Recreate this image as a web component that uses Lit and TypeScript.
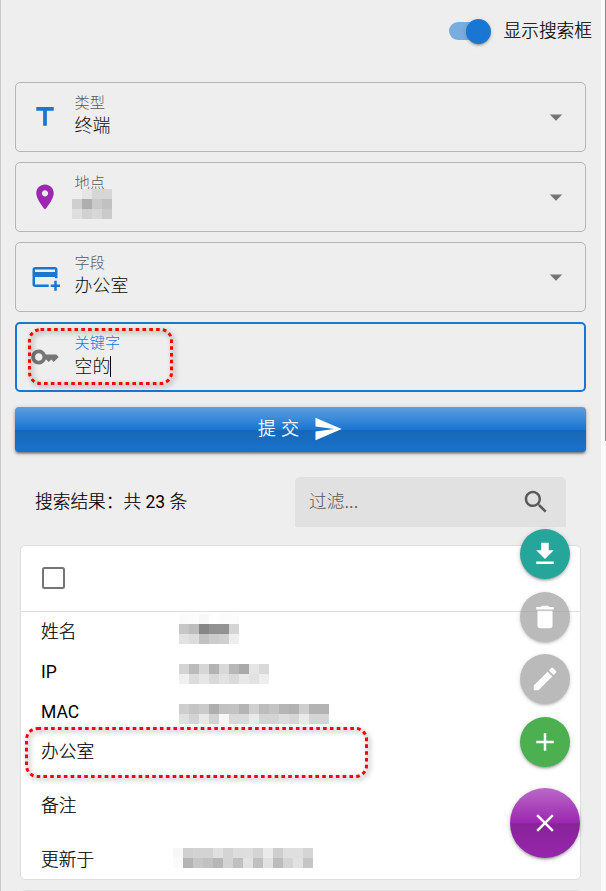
import { LitElement, html, css, svg, nothing } from "lit";
import { customElement, property } from "lit/decorators.js";

const ICONS: Record<string, string> = {
  title: "M5 4v3h5.5v12h3V7H19V4z",
  place: "M12 2C8.13 2 5 5.13 5 9c0 5.25 7 13 7 13s7-7.75 7-13c0-3.87-3.13-7-7-7zm0 9.5c-1.38 0-2.5-1.12-2.5-2.5s1.12-2.5 2.5-2.5 2.5 1.12 2.5 2.5-1.12 2.5-2.5 2.5z",
  cardPlus: "M21.4 18H24V20H21.4V23H19.4V20H16.6V18H19.4V15H21.4V18M20 8V6H4V8H20M20 12H4V18H15V20H4C2.89 20 2 19.1 2 18V6C2 4.89 2.89 4 4 4H20C21.11 4 22 4.9 22 6V13H20V12Z",
  key: "M21 10h-8.35C11.83 7.67 9.61 6 7 6c-3.31 0-6 2.69-6 6s2.69 6 6 6c2.61 0 4.83-1.67 5.65-4H13l2 2 2-2 2 2 4-4.04L21 10zM7 15c-1.65 0-3-1.35-3-3s1.35-3 3-3 3 1.35 3 3-1.35 3-3 3z",
  down: "M7 10l5 5 5-5z",
  send: "M2.01 21L23 12 2.01 3 2 10l15 2-15 2z",
  search: "M15.5 14h-.79l-.28-.27C15.41 12.59 16 11.11 16 9.5 16 5.91 13.09 3 9.5 3S3 5.91 3 9.5 5.91 16 9.5 16c1.61 0 3.09-.59 4.23-1.57l.27.28v.79l5 4.99L20.49 19l-4.99-5zm-6 0C7.01 14 5 11.99 5 9.5S7.01 5 9.5 5 14 7.01 14 9.5 11.99 14 9.5 14z",
  download: "M19 9h-4V3H9v6H5l7 7 7-7zM5 18v2h14v-2H5z",
  trash: "M6 19c0 1.1.9 2 2 2h8c1.1 0 2-.9 2-2V7H6v12zM19 4h-3.5l-1-1h-5l-1 1H5v2h14V4z",
  edit: "M3 17.25V21h3.75L17.81 9.94l-3.75-3.75L3 17.25zM20.71 7.04c.39-.39.39-1.02 0-1.41l-2.34-2.34c-.39-.39-1.02-.39-1.41 0l-1.83 1.83 3.75 3.75 1.83-1.83z",
  add: "M19 13h-6v6h-2v-6H5v-2h6V5h2v6h6v2z",
  close: "M19 6.41L17.59 5 12 10.59 6.41 5 5 6.41 10.59 12 5 17.59 6.41 19 12 13.41 17.59 19 19 17.59 13.41 12z",
};

@customElement("ui-icon")
class UiIcon extends LitElement {
  @property() name = "";
  static styles = css`
    :host { display: block; flex: none; width: 30px; height: 30px; }
    svg { display: block; width: 100%; height: 100%; fill: currentColor; }
  `;
  render() {
    return html`<svg viewBox="0 0 24 24">${svg`<path d=${ICONS[this.name]}></path>`}</svg>`;
  }
}

/* Censored value: one string per row, two hex digits of grey per cell. */
@customElement("pixel-mask")
class PixelMask extends LitElement {
  @property({ attribute: false }) rows: string[] = [];
  static styles = css`
    :host { display: block; }
    .line { display: flex; }
    .cell { width: 10px; height: 10px; }
  `;
  render() {
    return this.rows.map(
      (r) => html`<div class="line">${r.split(" ").map(
        (c) => html`<div class="cell" style=${c === "--" ? "" : `background:#${c}${c}${c}`}></div>`
      )}</div>`
    );
  }
}

@customElement("mark-box")
class MarkBox extends LitElement {
  @property({ type: Number }) w = 0;
  @property({ type: Number }) h = 0;
  static styles = css`
    :host { display: block; pointer-events: none; }
    svg { display: block; overflow: visible; filter: drop-shadow(2px 2px 2.5px rgba(0, 0, 0, 0.45)); }
    rect { fill: none; stroke: #ff0000; stroke-width: 3px; stroke-dasharray: 3.6 3.2; }
  `;
  render() {
    return html`<svg width=${this.w} height=${this.h}>
      <rect x="1.5" y="1.5" width=${this.w - 3} height=${this.h - 3} rx="11"></rect>
    </svg>`;
  }
}

const FIELDS = [
  { icon: "title", tone: "blue", label: "类型", value: "终端" },
  { icon: "place", tone: "purple", label: "地点", mask: ["-- e5 d6 d6", "cf ae c9 c1", "df d1 d7 ca"] },
  { icon: "cardPlus", tone: "blue", label: "字段", value: "办公室" },
  { icon: "key", tone: "grey", label: "关键字", value: "空的", focus: true },
];

const ROWS = [
  { label: "姓名", cls: "name", mask: ["fb fc f8 fe fc fc", "c6 bd 86 91 92 d4", "e2 dc c2 cb cf ee"] },
  { label: "IP", cls: "latin", mask: ["d3 bb d6 b3 d8 b7 a9 e5 d9", "f0 dc e6 d9 e2 da e8 e2 ee"] },
  { label: "MAC", cls: "latin", mask: ["ce c4 ca ae c1 c2 b4 d0 bc c4 b5 b2 ce b3 b3", "e0 d4 e8 d2 f7 d9 da ea d4 d4 dd d6 ea d5 d5"] },
  { label: "办公室", cls: "marked" },
  { label: "备注", cls: "spaced" },
  { label: "更新于", cls: "spaced updated", mask: ["f7 d0 d3 d3 e0 d4 dd de d3 ea ce df df d5", "fa b4 c7 c2 b7 d3 c0 e2 c0 e1 bc d4 e2 c5"] },
];

const ACTIONS = [
  { icon: "download", cls: "teal" },
  { icon: "trash", cls: "off" },
  { icon: "edit", cls: "off" },
  { icon: "add", cls: "green" },
  { icon: "close", cls: "main" },
];

@customElement("app-root")
class AppRoot extends LitElement {
  static styles = css`
    :host {
      display: flex;
      height: 891px;
      overflow: hidden;
      background: #fafafa;
      color: #000;
      font: 400 17.7px/26px Roboto, "Noto Sans CJK SC Light", "Noto Sans CJK SC", sans-serif;
    }
    * { box-sizing: border-box; }
    .page {
      position: relative;
      width: 601px;
      height: 891px;
      overflow: hidden;
      background: #eee;
      border-left: 1px solid #ccc;
    }
    .rail { flex: 1; }
    .thumb { width: 1px; height: 441px; margin-left: 4px; background: #8b8b8b; }

    .ink { -webkit-text-stroke: .2px #000; }
    .latin, .num { font-family: Roboto, sans-serif; font-size: 17.5px; -webkit-text-stroke: 0; }

    .top { display: flex; justify-content: flex-end; align-items: center; height: 62px; padding-right: 9px; }
    .toggle { position: relative; width: 42px; height: 25px; margin-right: 12.5px; }
    .track { width: 34px; height: 17.5px; margin-top: 3.75px; border-radius: 9px; background: #79acdf; }
    .knob {
      position: absolute; right: 0; top: 0; width: 25px; height: 25px; border-radius: 50%;
      background: #1976d2;
      box-shadow: 0 3px 1px -2px rgba(0,0,0,.2), 0 2px 2px rgba(0,0,0,.14), 0 1px 5px rgba(0,0,0,.12);
    }

    .form { display: flex; flex-direction: column; gap: 10px; padding: 20px 15px 0 14px; }
    .field {
      position: relative; display: flex; align-items: center; height: 70px; padding: 0 14px;
      border: 1px solid #b5b5b5; border-radius: 5px; color: #1d1d1d;
    }
    .field.focus { border: 2px solid #1976d2; padding: 0 13px; }
    .blue { color: #1976d2; }
    .purple { color: #9c27b0; }
    .grey { color: #757575; }
    .text { flex: 1; height: 50px; margin-left: 14.6px; padding-top: 1px; }
    .label { font-size: 15.2px; line-height: 20px; color: #5a5a5a; }
    .focus .label { color: #1976d2; }
    .value { display: flex; align-items: center; height: 26px; font-size: 17.9px; color: #0c0c0c; }
    .focus .value { padding-top: 1px; }
    .caret { width: 1px; height: 21px; background: #000; }
    .field pixel-mask { margin: -4px 0 0 -2.6px; }
    .field mark-box { position: absolute; left: 11px; top: 4px; }

    .submit {
      display: flex; align-items: center; justify-content: center; height: 45px;
      margin: 15px 15px 0 14px; border-radius: 4px; color: #fff;
      background: linear-gradient(to bottom, rgba(255,255,255,.3), rgba(255,255,255,0) 50%, rgba(0,0,0,.12) 51%, rgba(0,0,0,.04)) #1976d2;
      box-shadow: 0 1px 5px rgba(0,0,0,.2), 0 2px 2px rgba(0,0,0,.3), 0 3px 1px -2px rgba(0,0,0,.12);
    }
    .submit span { letter-spacing: .6px; margin-top: -1px; -webkit-text-stroke: .25px #fff; }
    .submit ui-icon { margin: -2px 0 0 13.5px; }

    .bar { display: flex; justify-content: space-between; align-items: center; height: 50px; margin: 25px 35px 0 34px; }
    .filter {
      display: flex; align-items: center; justify-content: space-between; width: 271px; height: 50px;
      padding: 0 15px 0 14px; background: #e1e1e1; border-radius: 5px 5px 0 0; color: #5a5a5a;
    }

    .card { height: 335px; margin: 18px 19px 0 19px; width: 561px; background: #fff; border: 1px solid #dedede; border-radius: 5px; }
    .head { height: 66px; padding: 21px 0 0 21px; border-bottom: 1px solid #dedede; }
    .check { width: 23px; height: 22px; border: 2px solid #757575; border-radius: 2.5px; }
    .row { position: relative; display: flex; align-items: center; height: 40px; padding-left: 20px; }
    .row.spaced { margin-top: 14px; }
    .key { width: 138px; }
    .row pixel-mask { margin-top: 4px; }
    .row.name pixel-mask { margin-top: -6px; }
    .row.updated pixel-mask { margin: -4px 0 0 -6px; }
    .row mark-box { position: absolute; left: 4px; top: -5px; }
    .next { height: 60px; width: 561px; margin: 10px 19px 0 19px; background: #fff; border: 1px solid #dedede; border-radius: 5px; }

    .fabs {
      position: absolute; right: 21px; top: 529px; width: 70px;
      display: flex; flex-direction: column; align-items: center; gap: 12.6px;
    }
    .fab {
      display: flex; align-items: center; justify-content: center; width: 50px; height: 50px;
      border-radius: 50%; color: #fff;
      box-shadow: 0 1px 5px rgba(0,0,0,.2), 0 2px 2px rgba(0,0,0,.14), 0 3px 1px -2px rgba(0,0,0,.12);
    }
    .teal { background: #26a69a; }
    .off { background: #9e9e9e; opacity: .7; }
    .green { background: #4caf50; }
    .main {
      width: 70px; height: 70px; margin-top: 8.6px;
      background: linear-gradient(to bottom, rgba(255,255,255,.3), rgba(255,255,255,0) 50%, rgba(0,0,0,.12) 51%, rgba(0,0,0,.04)) #9c27b0;
    }
  `;

  render() {
    return html`
      <div class="page">
        <div class="top">
          <div class="toggle"><div class="track"></div><div class="knob"></div></div>
          <span class="ink">显示搜索框</span>
        </div>
        <div class="form">
          ${FIELDS.map((f) => html`
            <div class="field ${f.focus ? "focus" : ""}">
              <ui-icon class=${f.tone} name=${f.icon}></ui-icon>
              <div class="text">
                <div class="label">${f.label}</div>
                ${f.mask
                  ? html`<pixel-mask .rows=${f.mask}></pixel-mask>`
                  : html`<div class="value">${f.value}${f.focus ? html`<span class="caret"></span>` : nothing}</div>`}
              </div>
              ${f.focus
                ? html`<mark-box w="145" h="57"></mark-box>`
                : html`<ui-icon class="grey" name="down"></ui-icon>`}
            </div>`)}
        </div>
        <div class="submit"><span>提 交</span><ui-icon name="send"></ui-icon></div>
        <div class="bar">
          <span class="ink">搜索结果：共 <span class="num">23</span> 条</span>
          <div class="filter"><span>过滤...</span><ui-icon name="search"></ui-icon></div>
        </div>
        <div class="card">
          <div class="head"><div class="check"></div></div>
          ${ROWS.map((r) => html`
            <div class="row ink ${r.cls}">
              <span class="key">${r.label}</span>
              ${r.mask ? html`<pixel-mask .rows=${r.mask}></pixel-mask>` : nothing}
              ${r.cls === "marked" ? html`<mark-box w="343" h="51"></mark-box>` : nothing}
            </div>`)}
        </div>
        <div class="next"></div>
        <div class="fabs">
          ${ACTIONS.map((a) => html`<div class="fab ${a.cls}"><ui-icon name=${a.icon}></ui-icon></div>`)}
        </div>
      </div>
      <div class="rail"><div class="thumb"></div></div>
    `;
  }
}
